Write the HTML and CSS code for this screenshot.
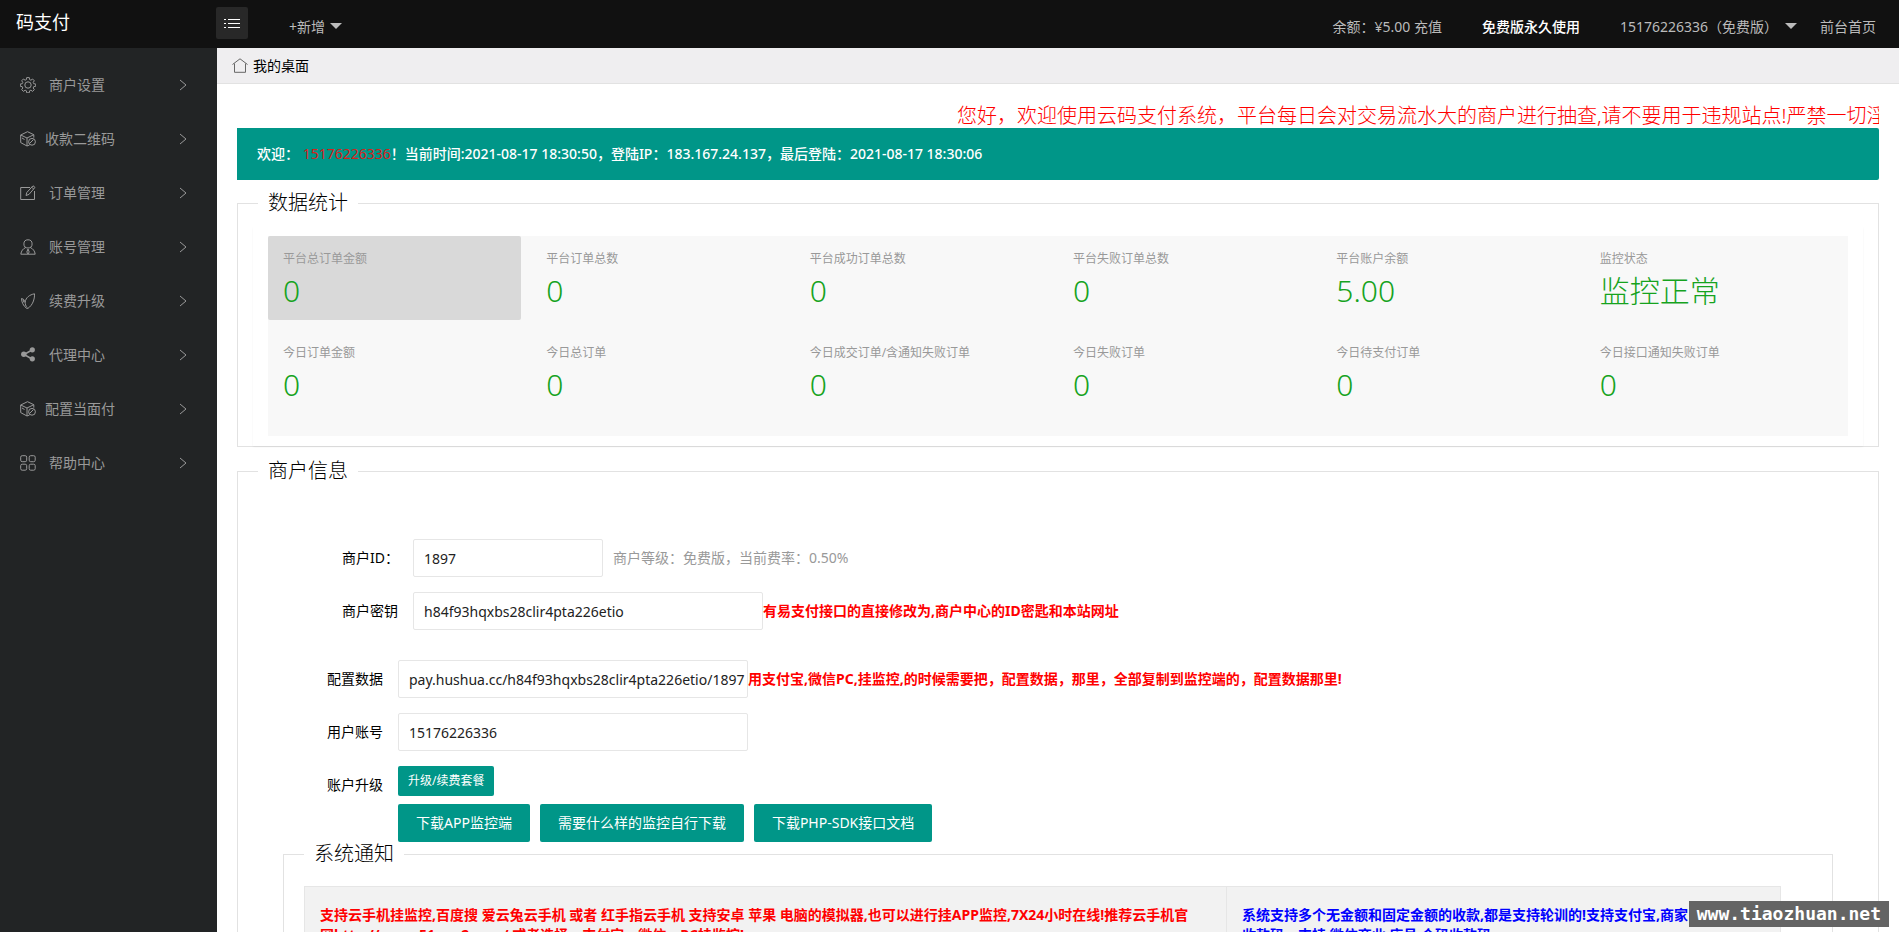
FILE: index.html
```html
<!DOCTYPE html>
<html lang="zh-CN">
<head>
<meta charset="utf-8">
<title>码支付</title>
<link rel="stylesheet" href="styles.css">
</head>
<body>
<svg class="sprite" aria-hidden="true">
  <symbol id="i-arrow" viewBox="0 0 8 12"><path d="M1 1l6 5-6 5"/></symbol>
  <symbol id="i-gear" viewBox="0 0 16 16"><circle cx="8" cy="8" r="3.2"/><path d="M6.7.6h2.6l.3 2 1.3.6 1.700-1.200 1.700 1.800-1.100 1.600.5 1.300 2 .3v2.300l-2 .4-.5 1.300 1.100 1.600-1.700 1.800-1.700-1.200-1.300.6-.3 2H6.700l-.3-2-1.300-.6-1.700 1.200-1.700-1.800 1.100-1.600-.5-1.300-2-.4V7l2-.3.5-1.300L1.700 3.800 3.400 2l1.700 1.200 1.300-.6z"/></symbol>
  <symbol id="i-cube" viewBox="0 0 16 16"><path d="M.7 4L7.500.7l6.300 3-6.800 3.300zM.7 4v7.600L7 15V7M13.800 3.700v3M4.500 8.500L2 7"/><circle cx="12" cy="10.800" r="3.400"/><path d="M9.500 12.500L13.500 8.500M7 15l2.500-1"/></symbol>
  <symbol id="i-edit" viewBox="0 0 16 16"><path d="M10 2.500H.7v12h13.800V6M6 10.500l.8-3L13 .8l2 1.600-6 7zM11.700 2.300l2 1.600"/></symbol>
  <symbol id="i-user" viewBox="0 0 16 16"><circle cx="8" cy="4.900" r="4.100"/><path d="M5.700 8.500C3 9.700 1.200 12 .8 15.200h14.400c-.4-3.200-2.200-5.500-4.900-6.700M8 10l-1.200 3L8 15l1.200-2z"/></symbol>
  <symbol id="i-leaf" viewBox="0 0 16 16"><path d="M6.500 15.300C3 12.500 1.700 9 1.500 5.500c1.800.3 3.200 1.500 3.600 3.500C6 4.500 9.500 1.700 14.500.8c.3 5.500-2 11.500-6.500 14.500zM5.100 9c.2 2 .5 4 1.900 5.500M3 6.500l1 3"/></symbol>
  <symbol id="i-share" viewBox="0 0 16 16"><path stroke-width="1.500" d="M12 3L4 7.500l8 4.500"/><circle class="solid" cx="12.300" cy="2.800" r="2.600"/><circle class="solid" cx="3.800" cy="7.300" r="2.700"/><circle class="solid" cx="12.300" cy="11.800" r="2.600"/></symbol>
  <symbol id="i-grid" viewBox="0 0 16 16"><rect x=".7" y=".7" width="6" height="6" rx="1.500"/><rect x="9.200" y=".7" width="6" height="6" rx="1.500"/><rect x=".7" y="9.200" width="6" height="6" rx="1.500"/><rect x="9.200" y="9.200" width="6" height="6" rx="1.500"/></symbol>
</svg>

<header class="topbar">
  <a class="logo" href="#">码支付</a>
  <button class="toggle" type="button" aria-label="折叠菜单">
    <svg viewBox="0 0 16 11"><path d="M0 1.500h2M4 1.500h12M0 5.500h2M4 5.500h12M0 9.500h2M4 9.500h12"/></svg>
  </button>
  <a class="add" href="#">+新增<i class="caret"></i></a>
  <nav class="topnav">
    <a href="#">余额：¥5.00 充值</a>
    <a class="strong" href="#">免费版永久使用</a>
    <a class="account" href="#">15176226336（免费版）<i class="caret"></i></a>
    <a href="#">前台首页</a>
  </nav>
</header>

<div class="shell">
  <nav class="sidebar">
    <a href="#"><svg class="ico"><use href="#i-gear"/></svg><span>商户设置</span><svg class="arr"><use href="#i-arrow"/></svg></a>
    <a class="tight" href="#"><svg class="ico"><use href="#i-cube"/></svg><span>收款二维码</span><svg class="arr"><use href="#i-arrow"/></svg></a>
    <a href="#"><svg class="ico"><use href="#i-edit"/></svg><span>订单管理</span><svg class="arr"><use href="#i-arrow"/></svg></a>
    <a href="#"><svg class="ico"><use href="#i-user"/></svg><span>账号管理</span><svg class="arr"><use href="#i-arrow"/></svg></a>
    <a href="#"><svg class="ico"><use href="#i-leaf"/></svg><span>续费升级</span><svg class="arr"><use href="#i-arrow"/></svg></a>
    <a href="#"><svg class="ico"><use href="#i-share"/></svg><span>代理中心</span><svg class="arr"><use href="#i-arrow"/></svg></a>
    <a class="tight" href="#"><svg class="ico"><use href="#i-cube"/></svg><span>配置当面付</span><svg class="arr"><use href="#i-arrow"/></svg></a>
    <a href="#"><svg class="ico"><use href="#i-grid"/></svg><span>帮助中心</span><svg class="arr"><use href="#i-arrow"/></svg></a>
  </nav>

  <div class="page">
    <div class="tabs">
      <svg class="home" viewBox="0 0 16 15"><path d="M.5 6.500L8 .8l7.500 5.700M2.500 5.500v8.800h11V5.500"/></svg>
      <span>我的桌面</span>
    </div>

    <main class="content">
      <div class="ticker">您好，欢迎使用云码支付系统，平台每日会对交易流水大的商户进行抽查,请不要用于违规站点!严禁一切淫</div>
      <div class="welcome">欢迎： <span class="uid">15176226336</span>！当前时间:2021-08-17 18:30:50，登陆IP：183.167.24.137，最后登陆：2021-08-17 18:30:06</div>

      <fieldset class="box stats-box">
        <legend>数据统计</legend>
        <div class="card">
          <div class="stats">
            <a class="stat active" href="#"><h3>平台总订单金额</h3><p>0</p></a>
            <a class="stat" href="#"><h3>平台订单总数</h3><p>0</p></a>
            <a class="stat" href="#"><h3>平台成功订单总数</h3><p>0</p></a>
            <a class="stat" href="#"><h3>平台失败订单总数</h3><p>0</p></a>
            <a class="stat" href="#"><h3>平台账户余额</h3><p>5.00</p></a>
            <a class="stat" href="#"><h3>监控状态</h3><p>监控正常</p></a>
            <a class="stat" href="#"><h3>今日订单金额</h3><p>0</p></a>
            <a class="stat" href="#"><h3>今日总订单</h3><p>0</p></a>
            <a class="stat" href="#"><h3>今日成交订单/含通知失败订单</h3><p>0</p></a>
            <a class="stat" href="#"><h3>今日失败订单</h3><p>0</p></a>
            <a class="stat" href="#"><h3>今日待支付订单</h3><p>0</p></a>
            <a class="stat" href="#"><h3>今日接口通知失败订单</h3><p>0</p></a>
          </div>
        </div>
      </fieldset>

      <fieldset class="box info-box">
        <legend>商户信息</legend>
        <div class="group inset">
          <div class="row"><label for="mid">商户ID：</label><input id="mid" class="short" type="text" value="1897"><span class="aux">商户等级：免费版，当前费率：0.50%</span></div>
          <div class="row"><label for="key">商户密钥</label><input id="key" type="text" value="h84f93hqxbs28clir4pta226etio"><strong>有易支付接口的直接修改为,商户中心的ID密匙和本站网址</strong></div>
        </div>
        <div class="group">
          <div class="row"><label for="cfg">配置数据</label><input id="cfg" type="text" value="pay.hushua.cc/h84f93hqxbs28clir4pta226etio/1897"><strong>用支付宝,微信PC,挂监控,的时候需要把，配置数据，那里，全部复制到监控端的，配置数据那里!</strong></div>
          <div class="row"><label for="acc">用户账号</label><input id="acc" type="text" value="15176226336"></div>
          <div class="row upgrade"><label for="up">账户升级</label><button id="up" class="btn small" type="button">升级/续费套餐</button></div>
          <div class="actions">
            <button class="btn" type="button">下载APP监控端</button>
            <button class="btn" type="button">需要什么样的监控自行下载</button>
            <button class="btn" type="button">下载PHP-SDK接口文档</button>
          </div>
        </div>
        <fieldset class="box notice-box">
          <legend>系统通知</legend>
          <table class="notice">
            <tr>
              <th class="red">支持云手机挂监控,百度搜 爱云兔云手机 或者 红手指云手机 支持安卓 苹果 电脑的模拟器,也可以进行挂APP监控,7X24小时在线!推荐云手机官<br>网http://www.51yun2.com/ 或者选择，支付宝，微信，PC挂监控!</th>
              <th class="blue">系统支持多个无金额和固定金额的收款,都是支持轮训的!支持支付宝,商家<br>收款码，支持 微信商业 店员 个码收款码</th>
            </tr>
          </table>
        </fieldset>
      </fieldset>
    </main>
  </div>
</div>
<div class="watermark">www.tiaozhuan.net</div>
</body>
</html>
```
FILE: styles.css
```css
* { box-sizing: border-box; }
html, body { height: 100%; }
body {
  margin: 0;
  display: flex;
  flex-direction: column;
  overflow: hidden;
  background: #fff;
  color: #000;
  font: 14px/24px "Noto Sans", "Noto Sans CJK SC", sans-serif;
}
a { color: inherit; text-decoration: none; }
h3, p { margin: 0; }
svg { fill: none; stroke: currentColor; }
.sprite { display: none; }
.solid { fill: currentColor; stroke: none; }

.topbar {
  flex: none;
  height: 48px;
  display: flex;
  align-items: flex-start;
  background: #111;
  color: #bbb;
}
.logo { width: 200px; padding: 10px 0 0 16px; margin-right: 16px; font-size: 18px; color: #fff; }
.toggle {
  width: 32px;
  height: 32px;
  margin: 7px 41px 0 0;
  padding: 0;
  display: grid;
  place-items: center;
  border: 0;
  border-radius: 2px;
  background: #282828;
  color: #fff;
}
.toggle svg { width: 16px; height: 11px; }
.add, .topnav { padding-top: 15px; }
.caret {
  display: inline-block;
  margin-left: 5px;
  vertical-align: 3px;
  border: 6px solid transparent;
  border-top-color: #bbb;
  border-bottom: 0;
}
.topnav { flex: 1; display: flex; justify-content: flex-end; padding-right: 23px; gap: 40px; }
.topnav .strong { color: #fff; font-weight: 500; }
.topnav .account { margin-right: -17px; }
.account .caret { margin-left: 7px; }

.shell { flex: 1; min-height: 0; display: flex; }
.sidebar {
  flex: none;
  width: 217px;
  padding-top: 10px;
  background: #222425;
  color: #999;
}
.sidebar a { height: 54px; padding: 0 30px 0 20px; display: flex; align-items: center; }
.sidebar .ico { width: 16px; height: 16px; margin-right: 13px; }
.sidebar .tight .ico { margin-right: 9px; }
.sidebar span { flex: 1; }
.sidebar .arr { width: 8px; height: 12px; }

.page { flex: 1; min-width: 0; display: flex; flex-direction: column; }
.tabs {
  flex: none;
  height: 36px;
  padding-left: 15px;
  display: flex;
  align-items: center;
  gap: 5px;
  background: #efeef0;
  border-bottom: 1px solid #e2e2e2;
}
.home { width: 16px; height: 15px; color: #666; }
.content { flex: 1; min-height: 0; overflow: hidden; padding: 18px 20px 0; }

.ticker {
  height: 26px;
  padding-left: 720px;
  overflow: hidden;
  white-space: nowrap;
  font-size: 20px;
  font-weight: 300;
  line-height: 28px;
  color: #f00;
}
.welcome {
  padding: 14px 20px;
  border-radius: 0 2px 2px 0;
  background: #009688;
  color: #fff;
  font-weight: 500;
}
.uid { color: #d9201a; font-weight: 400; }

.box { min-width: 0; margin: 0; padding: 0; border: 1px solid #e2e2e2; }
.box > legend { margin-left: 20px; padding: 0 10px; font-size: 20px; font-weight: 300; line-height: 24px; }
.stats-box { margin-top: 11px; }
.card { margin: 12px 15px 0; padding: 9px 15px 10px; box-shadow: 0 1px 2px rgba(0, 0, 0, .05); }
.stats {
  display: grid;
  grid-template-columns: repeat(6, 1fr);
  grid-auto-rows: 84px;
  gap: 10px;
  padding: 0 10px 22px 0;
  background: #f8f8f8;
}
.stat { padding: 11px 15px 9px; border-radius: 2px; white-space: nowrap; }
.stat.active { background: #d9d9d9; }
.stat h3 { font-size: 12px; font-weight: 400; line-height: 24px; color: #999; }
.stat p { font-size: 30px; font-weight: 300; line-height: 40px; color: #16a31e; }

.info-box { margin-top: 12px; }
.group { padding-left: 74px; display: flex; flex-direction: column; gap: 15px; }
.inset { padding: 56px 0 30px 89px; }
.row { height: 38px; display: flex; align-items: center; white-space: nowrap; }
.row label { width: 86px; padding-left: 15px; }
.row input {
  width: 350px;
  height: 38px;
  padding: 0 0 0 10px;
  border: 1px solid #e6e6e6;
  border-radius: 2px;
  background: #fff;
  color: #222;
  font: inherit;
}
.row .short { width: 190px; }
.aux { margin-left: 10px; color: #999; }
.row strong { color: #f00; font-weight: 700; }
.upgrade { height: 38px; align-items: flex-start; }
.upgrade label { line-height: 38px; }
.btn {
  height: 38px;
  padding: 0 18px;
  border: 0;
  border-radius: 2px;
  background: #009688;
  color: #fff;
  font: inherit;
}
.btn.small { height: 30px; padding: 0 10px; font-size: 12px; }
.actions { margin-top: -15px; padding-left: 86px; display: flex; gap: 10px; }

.notice-box { margin: 0 45px; }
.notice { width: calc(100% - 71px); margin: 20px 51px 0 20px; border-collapse: collapse; }
.notice th {
  padding: 18px 15px;
  border: 1px solid #e6e6e6;
  background: #f2f2f2;
  font-weight: 700;
  line-height: 20px;
  text-align: left;
  vertical-align: top;
  white-space: nowrap;
}
.notice .red { width: 922px; color: #f00; }
.notice .blue { color: #00f; }

.watermark {
  position: fixed;
  right: 10px;
  bottom: 5px;
  padding: 0 8px;
  background: #646464;
  color: #fff;
  font: 700 18px/26px "DejaVu Sans Mono", monospace;
}
```
